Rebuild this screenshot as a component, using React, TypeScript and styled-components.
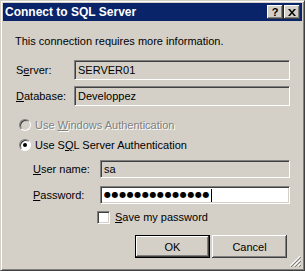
import React from 'react';
import styled, { createGlobalStyle } from 'styled-components';

const face = '#d4d0c8';
const shadow = '#808080';
const darkShadow = '#404040';
const font = `Tahoma, 'Liberation Sans', Arial, sans-serif`;

const GlobalStyle = createGlobalStyle`
    html, body {
        margin: 0;
        padding: 0;
        background: ${face};
    }
    body {
        font-family: ${font};
        font-size: 11px;
        color: #000;
    }
`;

const Window = styled.div`
    width: 305px;
    height: 271px;
    box-sizing: border-box;
    background: ${face};
    border-top: 1px solid ${face};
    border-left: 1px solid ${face};
    border-right: 1px solid ${darkShadow};
    border-bottom: 1px solid ${darkShadow};
    box-shadow: inset 1px 1px 0 #fff, inset -1px -1px 0 ${shadow};
    padding: 2px;
    position: relative;
    display: flex;
    flex-direction: column;
`;

const TitleBar = styled.div`
    height: 18px;
    background: #0a246a;
    display: flex;
    align-items: center;
    padding: 0 2px;
    gap: 1px;
`;

const Caption = styled.div`
    flex: 1;
    color: #fff;
    font-weight: bold;
    font-size: 12px;
`;

const CaptionButton = styled.button`
    width: 16px;
    height: 14px;
    padding: 0;
    margin: 0;
    background: ${face};
    border: none;
    box-shadow: inset -1px -1px 0 ${darkShadow}, inset 1px 1px 0 #fff, inset -2px -2px 0 ${shadow};
    font-family: ${font};
    font-weight: bold;
    font-size: 11px;
    line-height: 14px;
    color: #000;
    display: flex;
    align-items: center;
    justify-content: center;
`;

const Body = styled.div`
    flex: 1;
    padding: 12px 0 0 12px;
    display: flex;
    flex-direction: column;
`;

const Intro = styled.div`
    height: 14px;
    line-height: 14px;
    margin: 1px 0 12px;
`;

const FieldGrid = styled.div<{ $labelWidth: number; $indent: number; $gap: number }>`
    display: grid;
    grid-template-columns: ${({ $labelWidth }) => $labelWidth}px 1fr;
    row-gap: ${({ $gap }) => $gap}px;
    align-items: center;
    padding-left: ${({ $indent }) => $indent}px;
    padding-right: 12px;
`;

const Label = styled.label<{ $disabled?: boolean }>`
    line-height: 14px;
    color: ${({ $disabled }) => ($disabled ? '#808080' : '#000')};
    text-shadow: ${({ $disabled }) => ($disabled ? '1px 1px 0 #fff' : 'none')};
    u {
        text-decoration: underline;
        text-underline-offset: 1px;
    }
`;

const TextBox = styled.div<{ $editable?: boolean; $height: number }>`
    height: ${({ $height }) => $height}px;
    box-sizing: border-box;
    background: ${({ $editable }) => ($editable ? '#fff' : face)};
    border-top: 1px solid ${shadow};
    border-left: 1px solid ${shadow};
    border-right: 1px solid #fff;
    border-bottom: 1px solid #fff;
    box-shadow: inset 1px 1px 0 ${darkShadow}, inset -1px -1px 0 ${face};
    padding: 0 3px;
    display: flex;
    align-items: center;
    line-height: 14px;
`;

const Dots = styled.span`
    font-size: 8px;
    letter-spacing: 0.6px;
    font-family: 'DejaVu Sans', sans-serif;
`;

const Caret = styled.span`
    display: inline-block;
    width: 1px;
    height: 13px;
    background: #000;
    margin-left: 1px;
`;

const Options = styled.div`
    display: flex;
    flex-direction: column;
    gap: 8px;
    margin: 13px 0 9px 4px;
`;

const OptionRow = styled.div`
    display: flex;
    align-items: center;
    gap: 4px;
    height: 12px;
`;

const Radio = styled.span<{ $disabled?: boolean; $checked?: boolean }>`
    width: 12px;
    height: 12px;
    box-sizing: border-box;
    border-radius: 50%;
    background: ${({ $disabled }) => ($disabled ? face : '#fff')};
    border-top: 1px solid ${shadow};
    border-left: 1px solid ${shadow};
    border-right: 1px solid #fff;
    border-bottom: 1px solid #fff;
    box-shadow: inset 1px 1px 0 ${darkShadow};
    display: flex;
    align-items: center;
    justify-content: center;
    &::after {
        content: '';
        width: 4px;
        height: 4px;
        border-radius: 50%;
        background: #000;
        display: ${({ $checked }) => ($checked ? 'block' : 'none')};
    }
`;

const CheckRow = styled.div`
    display: flex;
    align-items: center;
    gap: 5px;
    margin: 6px 0 0 82px;
`;

const CheckBox = styled.span`
    width: 13px;
    height: 13px;
    box-sizing: border-box;
    background: #fff;
    border-top: 1px solid ${shadow};
    border-left: 1px solid ${shadow};
    border-right: 1px solid #fff;
    border-bottom: 1px solid #fff;
    box-shadow: inset 1px 1px 0 ${darkShadow}, inset -1px -1px 0 ${face};
`;

const ButtonRow = styled.div`
    display: flex;
    justify-content: flex-end;
    gap: 2px;
    padding-right: 15px;
    margin-top: 11px;
`;

const Button = styled.button<{ $default?: boolean }>`
    width: 75px;
    height: 23px;
    padding: 0;
    margin: 0;
    background: ${face};
    font-family: ${font};
    font-size: 11px;
    color: #000;
    border: ${({ $default }) => ($default ? '1px solid #000' : 'none')};
    box-shadow: inset -1px -1px 0 ${darkShadow}, inset 1px 1px 0 #fff, inset -2px -2px 0 ${shadow};
`;

const Grip = styled.svg`
    position: absolute;
    right: 3px;
    bottom: 3px;
`;

const App = () => (
    <>
        <GlobalStyle />
        <Window>
            <TitleBar>
                <Caption>Connect to SQL Server</Caption>
                <CaptionButton>?</CaptionButton>
                <CaptionButton>
                    <svg width="8" height="7" viewBox="0 0 8 7">
                        <path d="M0 0h2l2 2.5L6 0h2L5 3.5 8 7H6L4 4.5 2 7H0l3-3.5z" fill="#000" />
                    </svg>
                </CaptionButton>
            </TitleBar>
            <Body>
                <Intro>This connection requires more information.</Intro>
                <FieldGrid $labelWidth={58} $indent={1} $gap={6}>
                    <Label>S<u>e</u>rver:</Label>
                    <TextBox $height={20}>SERVER01</TextBox>
                    <Label><u>D</u>atabase:</Label>
                    <TextBox $height={20}>Developpez</TextBox>
                </FieldGrid>
                <Options>
                    <OptionRow>
                        <Radio $disabled />
                        <Label $disabled>Use <u>W</u>indows Authentication</Label>
                    </OptionRow>
                    <OptionRow>
                        <Radio $checked />
                        <Label>Use S<u>Q</u>L Server Authentication</Label>
                    </OptionRow>
                </Options>
                <FieldGrid $labelWidth={67} $indent={18} $gap={8}>
                    <Label><u>U</u>ser name:</Label>
                    <TextBox $height={18}>sa</TextBox>
                    <Label><u>P</u>assword:</Label>
                    <TextBox $height={18} $editable>
                        <Dots>●●●●●●●●●●●●●●</Dots>
                        <Caret />
                    </TextBox>
                </FieldGrid>
                <CheckRow>
                    <CheckBox />
                    <Label><u>S</u>ave my password</Label>
                </CheckRow>
                <ButtonRow>
                    <Button $default>OK</Button>
                    <Button>Cancel</Button>
                </ButtonRow>
            </Body>
            <Grip width="12" height="12" viewBox="0 0 12 12">
                <path d="M11 1L1 11M11 5L5 11M11 9L9 11" stroke="#fff" strokeWidth="1" />
                <path d="M12 1L1 12M12 5L5 12M12 9L9 12" stroke={shadow} strokeWidth="1" transform="translate(0.5 0.5)" />
            </Grip>
        </Window>
    </>
);

export default App;
